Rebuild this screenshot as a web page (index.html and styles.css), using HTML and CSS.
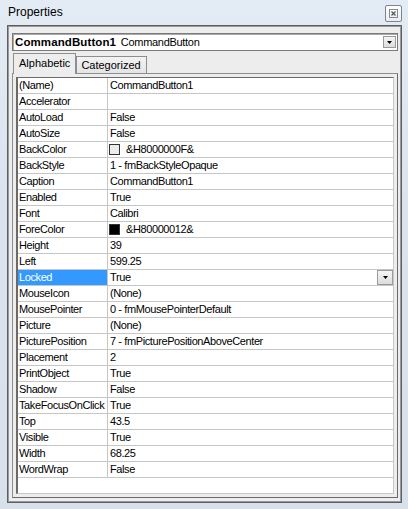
FILE: index.html
```html
<!DOCTYPE html>
<html>
<head>
<meta charset="utf-8">
<link rel="stylesheet" href="styles.css">
</head>
<body>
<div class="window">
  <div class="titlebar">
    <span class="title">Properties</span>
    <span class="close">
      <svg width="9" height="9" viewBox="0 0 9 9"><rect x="0.5" y="0.5" width="8" height="8" fill="none" stroke="#8a8a8a"/><path d="M2.5 2.5 L6.5 6.5 M6.5 2.5 L2.5 6.5" stroke="#555" stroke-width="1.2"/></svg>
    </span>
  </div>
  <div class="panel">
    <div class="combo">
      <span class="combo-text"><b>CommandButton1</b> CommandButton</span>
      <span class="dd"><svg width="5" height="3" viewBox="0 0 5 3"><path d="M0 0 H5 L2.5 3 Z" fill="#000"/></svg></span>
    </div>
    <div class="tabs">
      <span class="tab active">Alphabetic</span>
      <span class="tab">Categorized</span>
    </div>
    <div class="page">
      <div class="grid">
        <div class="row"><span class="name">(Name)</span><span class="val">CommandButton1</span></div>
        <div class="row"><span class="name">Accelerator</span><span class="val"></span></div>
        <div class="row"><span class="name">AutoLoad</span><span class="val">False</span></div>
        <div class="row"><span class="name">AutoSize</span><span class="val">False</span></div>
        <div class="row"><span class="name">BackColor</span><span class="val"><span class="swatch light"></span>&amp;H8000000F&amp;</span></div>
        <div class="row"><span class="name">BackStyle</span><span class="val">1 - fmBackStyleOpaque</span></div>
        <div class="row"><span class="name">Caption</span><span class="val">CommandButton1</span></div>
        <div class="row"><span class="name">Enabled</span><span class="val">True</span></div>
        <div class="row"><span class="name">Font</span><span class="val">Calibri</span></div>
        <div class="row"><span class="name">ForeColor</span><span class="val"><span class="swatch dark"></span>&amp;H80000012&amp;</span></div>
        <div class="row"><span class="name">Height</span><span class="val">39</span></div>
        <div class="row"><span class="name">Left</span><span class="val">599.25</span></div>
        <div class="row"><span class="name sel">Locked</span><span class="val">True<span class="dd cell-dd"><svg width="5" height="3" viewBox="0 0 5 3"><path d="M0 0 H5 L2.5 3 Z" fill="#000"/></svg></span></span></div>
        <div class="row"><span class="name">MouseIcon</span><span class="val">(None)</span></div>
        <div class="row"><span class="name">MousePointer</span><span class="val">0 - fmMousePointerDefault</span></div>
        <div class="row"><span class="name">Picture</span><span class="val">(None)</span></div>
        <div class="row"><span class="name">PicturePosition</span><span class="val">7 - fmPicturePositionAboveCenter</span></div>
        <div class="row"><span class="name">Placement</span><span class="val">2</span></div>
        <div class="row"><span class="name">PrintObject</span><span class="val">True</span></div>
        <div class="row"><span class="name">Shadow</span><span class="val">False</span></div>
        <div class="row"><span class="name">TakeFocusOnClick</span><span class="val">True</span></div>
        <div class="row"><span class="name">Top</span><span class="val">43.5</span></div>
        <div class="row"><span class="name">Visible</span><span class="val">True</span></div>
        <div class="row"><span class="name">Width</span><span class="val">68.25</span></div>
        <div class="row"><span class="name">WordWrap</span><span class="val">False</span></div>
      </div>
    </div>
  </div>
</div>
</body>
</html>
```
FILE: styles.css
```css
* { box-sizing: border-box; }
html, body { margin: 0; padding: 0; }
body {
  width: 408px;
  height: 509px;
  overflow: hidden;
  font-family: "Liberation Sans", Arial, sans-serif;
  color: #000;
}
.window {
  width: 408px;
  height: 509px;
  background: linear-gradient(180deg, #e3ecf5 0%, #d9e4ee 40%, #d6e1ec 100%);
  display: flex;
  flex-direction: column;
}
.titlebar {
  height: 25px;
  display: flex;
  align-items: flex-start;
  justify-content: space-between;
}
.title {
  font-size: 12px;
  line-height: 25px;
  padding-left: 8px;
  color: #000;
}
.close {
  width: 17px;
  height: 17px;
  margin-top: 5px;
  margin-right: 6px;
  border: 1px solid #7d8590;
  border-radius: 2px;
  background: linear-gradient(180deg, #ffffff, #e8eef4);
  display: flex;
  align-items: center;
  justify-content: center;
}
.panel {
  margin-left: 7px;
  width: 395px;
  height: 478px;
  border: 1px solid #5f5f5f;
  box-shadow: inset 1px 1px 0 #9a9a9a, inset -1px -1px 0 #9a9a9a;
  background: #ededed;
  padding: 7px 4px 4px 4px;
}
.combo {
  width: 386px;
  height: 18px;
  background: #fff;
  border: 1px solid #7a7a7a;
  box-shadow: inset 1px 1px 0 #a9a9a9;
  display: flex;
  align-items: center;
  justify-content: space-between;
  padding-left: 2px;
  padding-right: 1px;
}
.combo-text {
  font-size: 11px;
  letter-spacing: -0.3px;
  white-space: nowrap;
}
.combo-text b {
  font-size: 11.5px;
  letter-spacing: 0.1px;
  margin-right: 2px;
}
.dd {
  width: 13px;
  height: 12px;
  border: 1px solid #9a9a9a;
  background: linear-gradient(180deg, #f6f6f6, #dcdcdc);
  display: flex;
  align-items: center;
  justify-content: center;
}
.tabs {
  margin-top: 2px;
  height: 20px;
  display: flex;
  align-items: flex-end;
  padding-left: 1px;
  position: relative;
  z-index: 1;
}
.tab {
  font-size: 11px;
  height: 17px;
  line-height: 16px;
  border: 1px solid #8c8e94;
  border-bottom: none;
  padding: 0 5px 0 4px;
  background: linear-gradient(180deg, #f3f3f3, #e4e4e4);
  white-space: nowrap;
}
.tab.active {
  height: 21px;
  line-height: 19px;
  margin-bottom: -1px;
  padding: 0 5px 0 5px;
  background: #ededed;
  border-color: #8c8e94;
}
.page {
  width: 386px;
  height: 425px;
  border: 1px solid #8c8e94;
  border-right-color: #6a6a6a;
  border-bottom-color: #6a6a6a;
  padding: 3px;
}
.grid {
  width: 378px;
  height: 417px;
  background: #fff;
  border-style: solid;
  border-width: 1px 1px 1px 2px;
  border-color: #6a6a6a #c8c8c8 #c8c8c8 #6a6a6a;
}
.row {
  display: flex;
  height: 16px;
  border-bottom: 1px solid #c6c6c6;
  font-size: 11px;
  letter-spacing: -0.4px;
  line-height: 15px;
  white-space: nowrap;
}
.name {
  width: 90px;
  border-right: 1px solid #c6c6c6;
  padding-left: 1px;
}
.name.sel {
  background: #3399ff;
  color: #fff;
}
.val {
  flex: 1;
  padding-left: 2px;
  display: flex;
  align-items: center;
}
.swatch {
  width: 11px;
  height: 11px;
  border: 1px solid #333;
  margin-left: -1px;
  margin-right: 6px;
}
.swatch.light { background: #ececec; }
.swatch.dark { background: #000; }
.cell-dd {
  margin-left: auto;
  width: 16px;
  height: 15px;
  margin-right: 0;
}
```
